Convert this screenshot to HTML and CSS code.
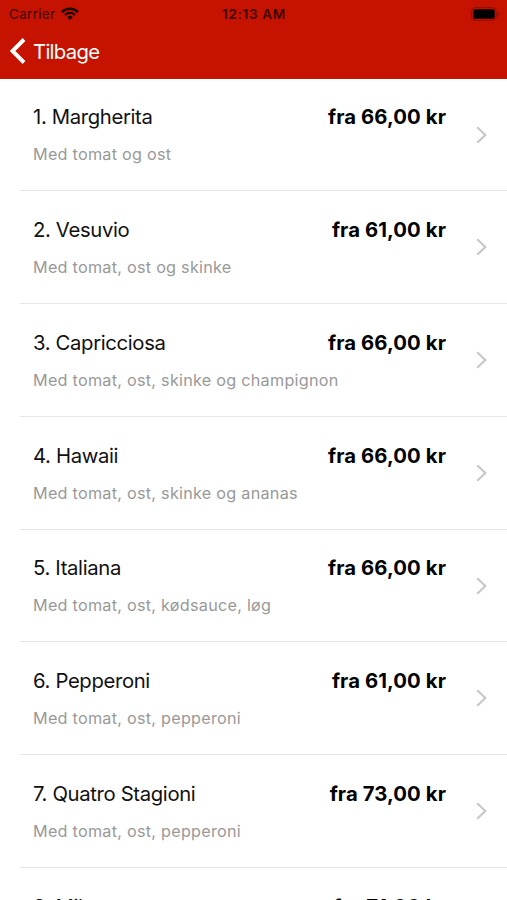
FILE: index.html
```html
<!DOCTYPE html>
<html lang="da">

<head>
  <meta charset="UTF-8" />
  <meta name="viewport" content="width=device-width, initial-scale=1.0" />
  <title>Menu</title>
  <link rel="stylesheet" href="styles.css">
</head>

<body>
  <header class="header">
    <div class="status">
      <div class="carrier">
        <span>Carrier</span>
        <svg class="wifi" viewBox="0 0 18 13">
          <path d="M1 5.1a11.4 11.4 0 0 1 16 0M3.9 8a7.3 7.3 0 0 1 10.2 0" />
          <path class="dot" d="M9 13 6.2 10.2a4 4 0 0 1 5.6 0z" />
        </svg>
      </div>
      <span class="time">12:13 AM</span>
      <svg class="battery" viewBox="0 0 30 14">
        <rect class="shell" x=".5" y=".5" width="25.5" height="13" rx="3.5" />
        <rect x="2" y="2" width="22.5" height="10" rx="2" />
        <path class="cap" d="M27.5 5v4q1.500-.6 1.500-2t-1.500-2" />
      </svg>
    </div>
    <nav class="nav">
      <svg class="back" viewBox="0 0 16 26">
        <path d="M14 1.500 2.500 13 14 24.500" />
      </svg>
      <span>Tilbage</span>
    </nav>
  </header>

  <ul class="menu">
    <li class="item">
      <div class="info">
        <div class="top"><span class="name">1. Margherita</span><span class="price">fra 66,00 kr</span></div>
        <p class="desc">Med tomat og ost</p>
      </div>
      <svg class="arrow" viewBox="0 0 11 18"><path d="M1.200 1.200 9.300 9l-8.100 7.800" /></svg>
    </li>
    <li class="item">
      <div class="info">
        <div class="top"><span class="name">2. Vesuvio</span><span class="price">fra 61,00 kr</span></div>
        <p class="desc">Med tomat, ost og skinke</p>
      </div>
      <svg class="arrow" viewBox="0 0 11 18"><path d="M1.200 1.200 9.300 9l-8.100 7.800" /></svg>
    </li>
    <li class="item">
      <div class="info">
        <div class="top"><span class="name">3. Capricciosa</span><span class="price">fra 66,00 kr</span></div>
        <p class="desc">Med tomat, ost, skinke og champignon</p>
      </div>
      <svg class="arrow" viewBox="0 0 11 18"><path d="M1.200 1.200 9.300 9l-8.100 7.800" /></svg>
    </li>
    <li class="item">
      <div class="info">
        <div class="top"><span class="name">4. Hawaii</span><span class="price">fra 66,00 kr</span></div>
        <p class="desc">Med tomat, ost, skinke og ananas</p>
      </div>
      <svg class="arrow" viewBox="0 0 11 18"><path d="M1.200 1.200 9.300 9l-8.100 7.800" /></svg>
    </li>
    <li class="item">
      <div class="info">
        <div class="top"><span class="name">5. Italiana</span><span class="price">fra 66,00 kr</span></div>
        <p class="desc">Med tomat, ost, kødsauce, løg</p>
      </div>
      <svg class="arrow" viewBox="0 0 11 18"><path d="M1.200 1.200 9.300 9l-8.100 7.800" /></svg>
    </li>
    <li class="item">
      <div class="info">
        <div class="top"><span class="name">6. Pepperoni</span><span class="price">fra 61,00 kr</span></div>
        <p class="desc">Med tomat, ost, pepperoni</p>
      </div>
      <svg class="arrow" viewBox="0 0 11 18"><path d="M1.200 1.200 9.300 9l-8.100 7.800" /></svg>
    </li>
    <li class="item">
      <div class="info">
        <div class="top"><span class="name">7. Quatro Stagioni</span><span class="price">fra 73,00 kr</span></div>
        <p class="desc">Med tomat, ost, pepperoni</p>
      </div>
      <svg class="arrow" viewBox="0 0 11 18"><path d="M1.200 1.200 9.300 9l-8.100 7.800" /></svg>
    </li>
    <li class="item">
      <div class="info">
        <div class="top"><span class="name">8. Milano</span><span class="price">fra 71,00 kr</span></div>
      </div>
      <svg class="arrow" viewBox="0 0 11 18"><path d="M1.200 1.200 9.300 9l-8.100 7.800" /></svg>
    </li>
  </ul>
</body>

</html>
```

FILE: styles.css
```css
* {
  box-sizing: border-box;
}

body {
  display: flex;
  flex-direction: column;
  height: 100vh;
  margin: 0;
  overflow: hidden;
  font-family: Inter, "Liberation Sans", sans-serif;
  background-color: #fff;
  color: #111;
}

svg {
  display: block;
  fill: none;
}

.header {
  flex: none;
  height: 79px;
  background-color: #c61300;
}

.status {
  display: grid;
  grid-template-columns: 1fr auto 1fr;
  align-items: center;
  height: 27px;
  padding: 0 8px 0 9px;
  font-size: 13.5px;
  letter-spacing: 0.3px;
  color: #3c0500;
}

.carrier {
  display: flex;
  align-items: center;
  gap: 6px;
}

.wifi {
  width: 18px;
  height: 13px;
  stroke: #1c0200;
  stroke-width: 2.4;
}

.wifi .dot {
  fill: #1c0200;
  stroke: none;
}

.time {
  font-weight: 600;
  letter-spacing: 0.7px;
}

.battery {
  justify-self: end;
  width: 29px;
  height: 14px;
  margin-right: -1px;
  fill: #000;
}

.battery .shell {
  fill: none;
  stroke: #8b0d00;
}

.battery .cap {
  fill: #8b0d00;
}

.nav {
  display: flex;
  align-items: center;
  gap: 7px;
  height: 48px;
  padding-left: 10px;
  font-size: 20.3px;
  letter-spacing: -0.7px;
  color: #fff;
}

.back {
  width: 16px;
  height: 26px;
  stroke: #fff;
  stroke-width: 3.9;
}

.menu {
  flex: 1;
  min-height: 0;
  margin: 0;
  padding: 0 0 0 20px;
  list-style: none;
}

.item {
  display: flex;
  align-items: center;
  height: 112.8px;
  padding: 0 20px 0 13px;
  border-bottom: 1px solid #e6e6e6;
}

.item:first-child {
  height: 112.3px;
}

.info {
  flex: 1;
  align-self: flex-start;
  padding-top: 25.7px;
}

.item:first-child .info {
  padding-top: 25.2px;
}

.top {
  display: flex;
  justify-content: space-between;
  line-height: 26px;
}

.name {
  font-size: 20.3px;
  letter-spacing: -0.35px;
}

.price {
  font-size: 20.3px;
  font-weight: 700;
  letter-spacing: 0.1px;
  color: #000;
}

.desc {
  margin: 14px 0 0;
  font-size: 16.2px;
  letter-spacing: 0.26px;
  line-height: 20px;
  color: #999;
}

.arrow {
  width: 11px;
  height: 18px;
  margin-left: 30px;
  stroke: #c7c7cc;
  stroke-width: 2.2;
}
```
